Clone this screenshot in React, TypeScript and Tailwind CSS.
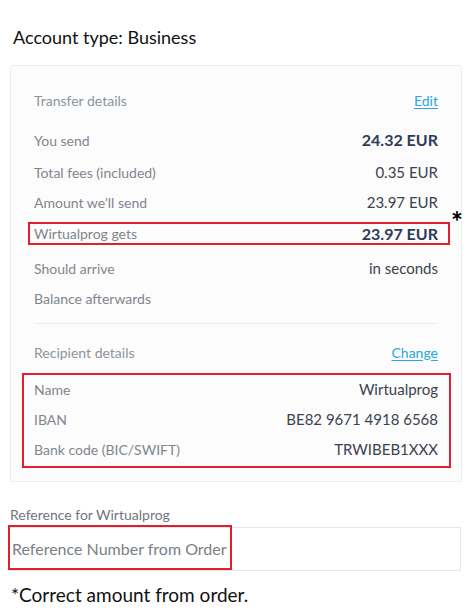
import React from "react";

const font = { fontFamily: "Lato, 'Open Sans', sans-serif" };

function Row({
  label,
  value,
  bold,
  className,
}: {
  label: string;
  value?: string;
  bold?: boolean;
  className?: string;
}) {
  return (
    <div className={"flex items-center justify-between " + (className ?? "h-[30px]")}>
      <span className="text-[14px] text-[#7f868e]">{label}</span>
      {value ? (
        bold ? (
          <span className="text-[16px] font-bold text-[#2f3a58]">{value}</span>
        ) : (
          <span className="text-[15px] text-[#3b4250]">{value}</span>
        )
      ) : null}
    </div>
  );
}

export default function App() {
  return (
    <div className="relative w-[474px] h-[616px] bg-white overflow-hidden" style={font}>
      <div className="pt-[25px] pl-[13px] h-[65px] text-[18px] leading-[24px] text-[#111]">
        Account type: Business
      </div>

      <div className="relative ml-[10px] mr-[12px] border border-[#ececec] rounded-[3px] bg-[#fcfcfc] px-[23px] pt-[19px] pb-[13px]">
        <div className="flex items-center justify-between h-[30px]">
          <span className="text-[14px] text-[#8b949c]">Transfer details</span>
          <span className="text-[14px] text-[#2ba6de] underline underline-offset-2">Edit</span>
        </div>
        <Row label="You send" value="24.32 EUR" bold className="h-[30px] mt-[10px]" />
        <Row label="Total fees (included)" value="0.35 EUR" className="h-[30px] mt-[2px]" />
        <Row label="Amount we’ll send" value="23.97 EUR" className="h-[30px]" />
        <div className="relative mt-[5px] ml-[-6px] mr-[-12px] h-[23px] border-2 border-[#e01e2d] pl-[4px] pr-[10px] flex items-center justify-between">
          <span className="text-[14px] text-[#7f868e]">Wirtualprog gets</span>
          <span className="text-[16px] font-bold text-[#2f3a58]">23.97 EUR</span>
          <span className="absolute right-[-15px] top-[-17px] text-[28px] font-bold leading-none text-black">*</span>
        </div>
        <Row label="Should arrive" value="in seconds" className="h-[30px] mt-[8px]" />
        <Row label="Balance afterwards" className="h-[30px]" />
        <div className="mt-[10px] h-px bg-[#ececec]" />
        <div className="flex items-center justify-between h-[30px] mt-[13px]">
          <span className="text-[14px] text-[#8b949c]">Recipient details</span>
          <span className="text-[14px] text-[#2ba6de] underline underline-offset-2">Change</span>
        </div>
        <div className="mt-[6px] ml-[-12px] mr-[-13px] border-2 border-[#e01e2d] pl-[10px] pr-[11px] pb-[2px]">
          <Row label="Name" value="Wirtualprog" className="h-[29px]" />
          <Row label="IBAN" value="BE82 9671 4918 6568" className="h-[30px]" />
          <Row label="Bank code (BIC/SWIFT)" value="TRWIBEB1XXX" className="h-[30px]" />
        </div>
      </div>

      <div className="mt-[24px] pl-[10px] text-[14px] leading-[18px] text-[#6f767e]">
        Reference for Wirtualprog
      </div>
      <div className="relative mt-[3px] ml-[8px] mr-[13px] h-[44px] border border-[#e6e6e6] bg-white flex items-center pl-[3px]">
        <span className="text-[16px] text-[#7a7f85]">Reference Number from Order</span>
        <div className="absolute left-[-1px] top-[-3px] w-[224px] h-[45px] border-2 border-[#e01e2d]" />
      </div>
      <div className="mt-[12px] pl-[11px] text-[19px] leading-[24px] text-[#111]">
        *Correct amount from order.
      </div>
    </div>
  );
}
